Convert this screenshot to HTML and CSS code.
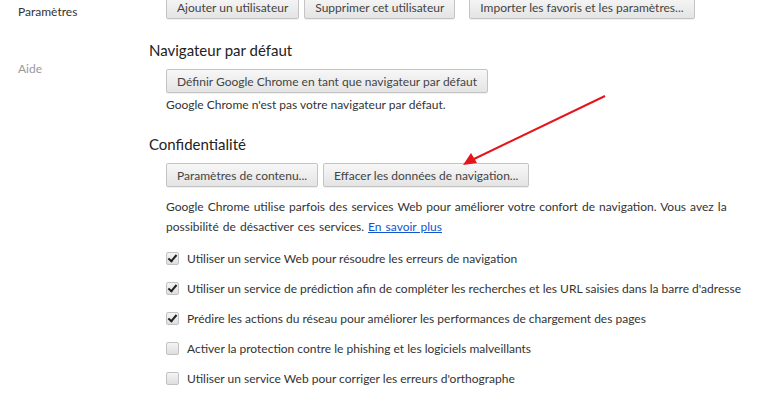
FILE: index.html
```html
<!DOCTYPE html>
<html lang="fr">

<head>
    <meta charset="UTF-8">
    <meta name="viewport" content="width=device-width, initial-scale=1.0">
    <title>Paramètres</title>
    <link rel="stylesheet" href="styles.css">
</head>

<body>
    <div class="page">
        <nav class="sidebar">
            <div class="nav-item current">Paramètres</div>
            <div class="nav-item">Aide</div>
        </nav>

        <main class="content">
            <section class="section first">
                <div class="button-row">
                    <button class="btn">Ajouter un utilisateur</button>
                    <button class="btn">Supprimer cet utilisateur</button>
                    <button class="btn spaced">Importer les favoris et les paramètres...</button>
                </div>
            </section>

            <section class="section">
                <h3>Navigateur par défaut</h3>
                <div class="section-body">
                    <div class="button-row">
                        <button class="btn">Définir Google Chrome en tant que navigateur par défaut</button>
                    </div>
                    <p class="note">Google Chrome n'est pas votre navigateur par défaut.</p>
                </div>
            </section>

            <section class="section">
                <h3>Confidentialité</h3>
                <div class="section-body">
                    <div class="button-row">
                        <button class="btn">Paramètres de contenu...</button>
                        <button class="btn">Effacer les données de navigation...</button>
                    </div>
                    <p class="text">Google Chrome utilise parfois des services Web pour améliorer votre confort de navigation. Vous avez la<br>
                        possibilité de désactiver ces services. <a href="#">En savoir plus</a></p>
                    <ul class="options">
                        <li><label><input type="checkbox" checked> Utiliser un service Web pour résoudre les erreurs de navigation</label></li>
                        <li><label><input type="checkbox" checked> Utiliser un service de prédiction afin de compléter les recherches et les URL saisies dans la barre d'adresse</label></li>
                        <li><label><input type="checkbox" checked> Prédire les actions du réseau pour améliorer les performances de chargement des pages</label></li>
                        <li><label><input type="checkbox"> Activer la protection contre le phishing et les logiciels malveillants</label></li>
                        <li><label><input type="checkbox"> Utiliser un service Web pour corriger les erreurs d'orthographe</label></li>
                    </ul>
                </div>
            </section>
        </main>

        <!-- annotation drawn over the screenshot -->
        <svg class="arrow" width="770" height="399" viewBox="0 0 770 399">
            <line x1="605" y1="96" x2="474" y2="159" stroke="#e3161b" stroke-width="2" />
            <polygon points="463,165 471,153 477,163" fill="#e3161b" />
        </svg>
    </div>
</body>

</html>
```

FILE: styles.css
```css
body {
    margin: 0;
    background: #fff;
    font-family: Lato, "Open Sans", sans-serif;
    font-size: 12px;
    color: #333;
}

.page {
    position: relative;
    display: flex;
    height: 399px;
    overflow: hidden;
}

.sidebar {
    width: 131px;
    flex-shrink: 0;
    padding: 4px 0 0 18px;
}

.nav-item {
    line-height: 16px;
    margin-bottom: 41px;
    color: #999;
}

.nav-item.current {
    color: #333;
}

.content {
    flex: 1;
    margin-top: -5px;
}

.section {
    margin-bottom: 22px;
}

.section h3 {
    margin: 0 0 10px;
    font-size: 15px;
    font-weight: normal;
    line-height: 18px;
    color: #222;
}

.section-body {
    padding-left: 17px;
}

.section.first {
    padding-left: 17px;
}

.button-row {
    display: flex;
    gap: 5px;
}

.btn {
    height: 24px;
    padding: 0 10px;
    font-family: inherit;
    font-size: 12px;
    color: #444;
    background: linear-gradient(#f7f7f7, #e4e4e4);
    border: 1px solid #c4c4c4;
    border-radius: 2px;
    box-shadow: 0 1px 0 rgba(0, 0, 0, 0.06);
}

.btn.spaced {
    margin-left: 9px;
}

.note {
    margin: 4px 0 0;
    line-height: 16px;
}

.text {
    margin: 10px 0 0;
    line-height: 20px;
    word-spacing: 1px;
}

.text a {
    color: #1155cc;
}

.options {
    list-style: none;
    margin: 6px 0 0;
    padding: 0;
}

.options li {
    height: 30px;
    display: flex;
    align-items: center;
    white-space: nowrap;
}

.options label {
    display: flex;
    align-items: center;
    gap: 8px;
}

.options input {
    appearance: none;
    position: relative;
    flex-shrink: 0;
    width: 13px;
    height: 13px;
    margin: 0;
    border: 1px solid #c2c2c2;
    border-radius: 2px;
    background: linear-gradient(#f4f4f4, #dedede);
}

.options input:checked::after {
    content: "";
    position: absolute;
    left: 3px;
    top: 0;
    width: 3px;
    height: 7px;
    border: solid #222;
    border-width: 0 2px 2px 0;
    transform: rotate(40deg);
}

.arrow {
    position: absolute;
    left: 0;
    top: 0;
    pointer-events: none;
}
```
